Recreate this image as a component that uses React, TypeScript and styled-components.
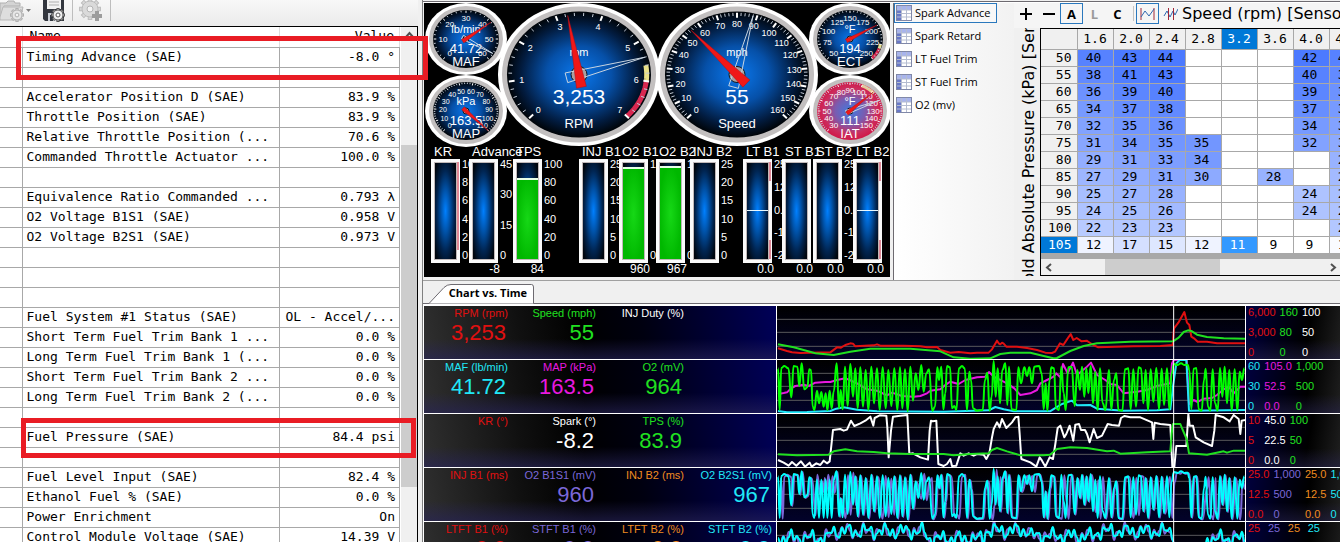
import React from 'react';
import styled, { createGlobalStyle } from 'styled-components';

const GlobalStyle = createGlobalStyle`
  * { box-sizing: border-box; }
  body { margin: 0; background: #f0f0f0; color: #000; font-family: 'Liberation Sans', Arial, sans-serif; }
  button { font: inherit; color: inherit; margin: 0; padding: 0; border: 0; background: none; }
  table { border-collapse: collapse; }
`;

const mono = `'DejaVu Sans Mono', 'Liberation Mono', monospace`;
const ui = `'Open Sans', 'Noto Sans', sans-serif`;

/* ---------- page ---------- */

const Page = styled.main`
  position: relative;
  display: grid;
  grid-template-columns: 418px minmax(0, 1fr);
  height: 100vh;
  overflow: hidden;
`;

const Highlight = styled.div<{ $left: number; $top: number; $width: number; $height: number }>`
  position: absolute;
  left: ${(p) => p.$left}px;
  top: ${(p) => p.$top}px;
  width: ${(p) => p.$width}px;
  height: ${(p) => p.$height}px;
  border: 5px solid #e91c24;
  pointer-events: none;
`;

/* ---------- channel list ---------- */

const ChannelPane = styled.section`
  display: flex;
  flex-direction: column;
  min-height: 0;
`;

const Toolbar = styled.div`
  display: flex;
  flex: none;
  height: 26px;
  padding-bottom: 3px;
  background: linear-gradient(#f8f8f8, #ebebeb);
`;

const ToolButton = styled.button<{ $width: number }>`
  display: flex;
  align-items: flex-start;
  width: ${(p) => p.$width}px;
  overflow: hidden;
`;

const ToolSeparator = styled.span`
  width: 1px;
  margin-right: 6px;
  height: 21px;
  background: #bdbdbd;
`;

const ChannelBody = styled.div`
  display: flex;
  flex: 1;
  min-height: 0;
  overflow: hidden;
  border-top: 1px solid #000;
  border-right: 1px solid #000;
  background: #fff;
`;

const ChannelTable = styled.table`
  table-layout: fixed;
  width: 400px;
  align-self: flex-start;
  font: 13px/18px ${mono};
  thead tr { height: 20px; }
`;

const ChannelRow = styled.tr`
  height: 20px;
`;

const ChannelCell = styled.td<{ $right?: boolean }>`
  padding: 0 4px 1px 4px;
  border-right: 1px solid #a8a8a8;
  border-bottom: 1px solid #a8a8a8;
  text-align: ${(p) => (p.$right ? 'right' : 'left')};
  white-space: nowrap;
  overflow: hidden;
`;

const HeadCell = styled(ChannelCell)`
  padding: 0 5px 1px 7px;
  border-right-color: #ddd;
  font-weight: normal;
`;

const ScrollTrack = styled.div`
  display: flex;
  flex-direction: column;
  flex: 1;
  background: #f0f0f0;
  border-left: 1px solid #fff;
`;

const ScrollArrow = styled.button`
  display: grid;
  place-items: center;
  flex: none;
  width: 16px;
  height: 17px;
`;

const ScrollThumb = styled.div`
  height: 342px;
  margin-top: 101px;
  background: #cdcdcd;
`;

/* ---------- right side ---------- */

const Workspace = styled.div`
  display: flex;
  flex-direction: column;
  min-width: 0;
  margin-left: 4px;
  border-left: 1px solid #808080;
  background: #f0f0f0;
`;

const TopStrip = styled.div`
  flex: none;
  height: 3px;
  border-bottom: 1px solid #fff;
  background: linear-gradient(#f0f0f0 1px, #6d6a70 1px);
`;

const TopPanels = styled.div`
  display: flex;
  flex: none;
  height: 278px;
  padding-left: 1px;
  border-bottom: 1px solid #a0a0a0;
`;

const GaugePanel = styled.section`
  flex: none;
  width: 466px;
  height: 274px;
  background: #000;
  color: #fff;
  overflow: hidden;
`;

const DialRow = styled.div`
  display: flex;
  height: 143px;
  padding-left: 1px;
`;

const DialStack = styled.div`
  display: flex;
  flex-direction: column;
  justify-content: space-between;
  flex: none;
  width: 82px;
  & + *, * + & { margin-left: -9px; }
  svg { margin: 0 0 -1px; }
`;

const BigDialBox = styled.div`
  flex: none;
  width: 162px;
  & + & { margin-left: -4px; }
`;

const MeterRow = styled.div`
  display: flex;
  padding-left: 7px;
`;

const Meter = styled.div<{ $pitch: number }>`
  position: relative;
  flex: none;
  width: ${(p) => p.$pitch}px;
  white-space: nowrap;
`;

const MeterName = styled.div`
  height: 13px;
  padding-left: 3px;
  font-size: 13px;
  line-height: 12px;
`;

const MeterBody = styled.div`
  display: flex;
  height: 104px;
`;

const MeterFrame = styled.div`
  position: relative;
  display: flex;
  flex: none;
  flex-direction: column;
  justify-content: flex-end;
  width: 29px;
  border: 3px solid #fafafa;
  padding: 1px;
  background: radial-gradient(ellipse at center, #0080ff 0, #0054ac 30%, #002450 60%, #00060e 90%) content-box, #c0b8b8;
`;

const MeterFill = styled.div`
  border-top: 2px solid #e8ffe8;
  background: radial-gradient(ellipse at center, #16d816, #00b800 75%);
`;

const MeterZone = styled.span<{ $top: number; $size: number }>`
  position: absolute;
  right: -2px;
  top: ${(p) => p.$top}px;
  width: 2px;
  height: ${(p) => p.$size}px;
  background: #e08896;
`;

const MeterZero = styled.span`
  position: absolute;
  left: 1px;
  right: 1px;
  top: 48px;
  height: 1px;
  background: #e8f8ff;
`;

const MeterScale = styled.div`
  display: flex;
  flex-direction: column;
  justify-content: space-between;
  width: 0;
  height: 102px;
  padding-left: 2px;
  font-size: 11px;
  line-height: 11px;
`;

const MeterValue = styled.div`
  width: 31px;
  height: 14px;
  font-size: 12px;
  line-height: 12px;
  text-align: right;
`;

/* ---------- histogram ---------- */

const HistogramList = styled.nav`
  display: flex;
  flex-direction: column;
  gap: 3px;
  flex: none;
  width: 121px;
  margin-left: 3px;
  border-left: 1px solid #6d6a70;
  background: linear-gradient(90deg, #fff, #f2f2f2);
  font: 11px/18px ${ui};
`;

const HistogramItem = styled.button<{ $active?: boolean }>`
  display: flex;
  align-items: center;
  gap: 3px;
  width: 103px;
  height: 20px;
  padding-left: 1px;
  border: 1px solid ${(p) => (p.$active ? '#2a78bd' : 'transparent')};
  background: ${(p) => (p.$active ? '#f8f8f8' : 'transparent')};
  text-align: left;
  white-space: nowrap;
`;

const HistogramPane = styled.section`
  display: flex;
  flex: 1;
  flex-direction: column;
  min-width: 0;
`;

const HistogramBar = styled.div`
  display: flex;
  align-items: center;
  flex: none;
  height: 25px;
  padding-bottom: 4px;
  overflow: hidden;
  background: #f5f5f5;
`;

const ModeButton = styled.button<{ $on?: boolean; $muted?: boolean }>`
  display: grid;
  place-items: center;
  flex: none;
  width: 23px;
  height: 21px;
  border: 1px solid ${(p) => (p.$on ? '#2a78bd' : 'transparent')};
  color: ${(p) => (p.$muted ? '#9a9a9a' : '#000')};
  font: bold 13px/16px ${ui};
`;

const BarSeparator = styled.span`
  flex: none;
  width: 1px;
  height: 15px;
  margin: 0 2px 0 4px;
  background: #c4c4c4;
`;

const AxisTitle = styled.h2`
  margin: 0;
  font: 16px/20px 'DejaVu Sans', sans-serif;
  white-space: nowrap;
`;

const HistogramBody = styled.div`
  display: flex;
  flex: 1;
  min-height: 0;
  padding-bottom: 4px;
`;

const AxisColumn = styled.div`
  display: flex;
  align-items: center;
  justify-content: center;
  flex: none;
  width: 26px;
  padding: 14px 0 0 4px;
  overflow: hidden;
  h2 { writing-mode: vertical-rl; transform: rotate(180deg); }
`;

const GridFrame = styled.div`
  flex: 1;
  min-width: 0;
  overflow: hidden;
  border: 1px solid #000;
  border-right: 0;
  background: #a8a8a8;
`;

const GridTable = styled.table`
  table-layout: fixed;
  width: 324px;
  font: 13px/15px ${mono};
  text-align: center;
`;

const ColHead = styled.th<{ $on?: boolean }>`
  height: 20px;
  padding: 0;
  font-weight: normal;
  border-right: 1px solid #a8a8a8;
  border-bottom: 1px solid #a8a8a8;
  background: ${(p) => (p.$on ? '#0078d7' : '#f0f0f0')};
  color: ${(p) => (p.$on ? '#fff' : '#000')};
`;

const RowHead = styled(ColHead)`
  height: 17px;
  padding-right: 5px;
  text-align: right;
`;

const Cell = styled.td<{ $tint: string; $on?: boolean }>`
  height: 17px;
  padding: 0 3px 0 0;
  border-right: 1px solid #a8a8a8;
  border-bottom: 1px solid #a8a8a8;
  background: ${(p) => p.$tint};
  color: ${(p) => (p.$on ? '#fff' : '#000')};
`;

const HScroll = styled.div`
  display: flex;
  justify-content: space-between;
  height: 17px;
  margin-top: 5px;
  background: #f0f0f0;
`;

const HThumb = styled.div`
  flex: none;
  width: 115px;
  margin-left: 48px;
  margin-right: auto;
  background: #cdcdcd;
`;

/* ---------- chart ---------- */

const TabBar = styled.div`
  flex: none;
  display: flex;
  align-items: flex-end;
  height: 23px;
  padding-left: 6px;
  border-bottom: 1px solid #6d6a70;
`;

const Tab = styled.button`
  position: relative;
  width: 105px;
  height: 20px;
  margin-bottom: -1px;
  padding: 0 0 3px 13px;
  font: bold 11px/17px ${ui};
  white-space: nowrap;
  svg { position: absolute; left: 0; top: 0; }
  span { position: relative; }
`;

const ChartList = styled.section`
  display: flex;
  flex: 1;
  flex-direction: column;
  gap: 1px;
  min-height: 0;
  overflow: hidden;
  padding: 2px 0 0 1px;
  background: #fff;
`;

const ChartRow = styled.div`
  display: grid;
  grid-template-columns: 352px minmax(0, 1fr) 94px;
  gap: 1px;
  flex: none;
  height: 53px;
`;

const Readouts = styled.div`
  display: grid;
  grid-template-columns: repeat(4, 88px);
  background: linear-gradient(to top, rgba(40, 36, 90, 0.6), transparent 38%),
    linear-gradient(80deg, #303030 0, #101010 28%, #000 45%, #000010 62%, #000058 100%);
`;

const Readout = styled.div<{ $color: string }>`
  color: ${(p) => p.$color};
  text-align: right;
  white-space: nowrap;
`;

const ReadoutName = styled.div`
  padding-right: 4px;
  font-size: 11px;
  line-height: 14px;
`;

const ReadoutValue = styled.div`
  padding-right: 6px;
  font-size: 22px;
  line-height: 26px;
`;

const Plot = styled.svg`
  display: block;
  width: 100%;
  height: 53px;
  background: linear-gradient(#000, #02022a);
`;

const Scales = styled.div`
  display: flex;
  gap: 4px;
  padding-left: 2px;
  overflow: hidden;
  background: linear-gradient(to top, rgba(40, 36, 80, 0.5), transparent 35%),
    linear-gradient(100deg, #000040 0, #000014 40%, #000 65%, #202020 100%);
`;

const Scale = styled.div<{ $color: string }>`
  display: flex;
  flex: none;
  flex-direction: column;
  justify-content: space-between;
  color: ${(p) => p.$color};
  font-size: 11px;
  line-height: 13px;
`;

/* ---------- data ---------- */

const channels: [string, string][] = [
  ['Timing Advance (SAE)', '-8.0 °'],
  ['', ''],
  ['Accelerator Position D (SAE)', '83.9 %'],
  ['Throttle Position (SAE)', '83.9 %'],
  ['Relative Throttle Position (...', '70.6 %'],
  ['Commanded Throttle Actuator ...', '100.0 %'],
  ['', ''],
  ['Equivalence Ratio Commanded ...', '0.793 λ'],
  ['O2 Voltage B1S1 (SAE)', '0.958 V'],
  ['O2 Voltage B2S1 (SAE)', '0.973 V'],
  ['', ''],
  ['', ''],
  ['', ''],
  ['Fuel System #1 Status (SAE)', 'OL - Accel/...'],
  ['Short Term Fuel Trim Bank 1 ...', '0.0 %'],
  ['Long Term Fuel Trim Bank 1 (...', '0.0 %'],
  ['Short Term Fuel Trim Bank 2 ...', '0.0 %'],
  ['Long Term Fuel Trim Bank 2 (...', '0.0 %'],
  ['', ''],
  ['Fuel Pressure (SAE)', '84.4 psi'],
  ['', ''],
  ['Fuel Level Input (SAE)', '82.4 %'],
  ['Ethanol Fuel % (SAE)', '0.0 %'],
  ['Power Enrichment', 'On'],
  ['Control Module Voltage (SAE)', '14.39 V'],
];

interface MeterSpec {
  name: string;
  pitch: number;
  ticks?: string[];
  value?: string;
  fill?: number;
  zero?: boolean;
  zones?: [number, number][];
}

const injTicks = ['25', '20', '15', '10', '5', '0'];
const trimTicks = ['25', '12.5', '0.0', '-12.5', '-25'];

const meters: MeterSpec[] = [
  { name: 'KR', pitch: 38, ticks: ['10', '8', '6', '4', '2', '0'], zones: [[0, 88]] },
  { name: 'Advance', pitch: 44, ticks: ['45', '30', '15', '0'], value: '-8' },
  { name: 'TPS', pitch: 66, ticks: ['100', '80', '60', '40', '20', '0'], value: '84', fill: 84 },
  { name: 'INJ B1', pitch: 40, ticks: injTicks },
  { name: 'O2 B1', pitch: 37, ticks: ['1,000', '0'], value: '960', fill: 96 },
  { name: 'O2 B2', pitch: 34, ticks: ['1,000', '0'], value: '967', fill: 97 },
  { name: 'INJ B2', pitch: 53, ticks: injTicks },
  { name: 'LT B1', pitch: 39, ticks: trimTicks, value: '0.0', zero: true, zones: [[0, 19], [78, 19]] },
  { name: 'ST B1', pitch: 31, value: '0.0' },
  { name: 'ST B2', pitch: 40, ticks: trimTicks, value: '0.0' },
  { name: 'LT B2', pitch: 37, value: '0.0', zero: true, zones: [[0, 19], [78, 19]] },
];

const gridCols = ['1.6', '2.0', '2.4', '2.8', '3.2', '3.6', '4.0', '4.4'];
const gridRows: [string, (number | null)[]][] = [
  ['50', [40, 43, 44, null, null, null, 42, 40]],
  ['55', [38, 41, 43, null, null, null, 40, 38]],
  ['60', [36, 39, 40, null, null, null, 39, 36]],
  ['65', [34, 37, 38, null, null, null, 37, 34]],
  ['70', [32, 35, 36, null, null, null, 34, 32]],
  ['75', [31, 34, 35, 35, null, null, 32, 30]],
  ['80', [29, 31, 33, 34, null, null, null, 28]],
  ['85', [27, 29, 31, 30, null, 28, null, 26]],
  ['90', [25, 27, 28, null, null, null, 24, 25]],
  ['95', [24, 25, 26, null, null, null, 24, 24]],
  ['100', [22, 23, 23, null, null, null, null, 23]],
  ['105', [12, 17, 15, 12, 11, 9, 9, 10]],
];

const tint = (v: number | null) => {
  if (v === null) return '#fff';
  const t = Math.max(0, Math.min(1, (v - 9) / 33));
  return `rgb(${Math.round(255 - 179 * t)}, ${Math.round(255 - 133 * t)}, 255)`;
};

const red = '#e01010';
const green = '#20e020';
const cyan = '#20e8f8';
const magenta = '#e818e0';
const violet = '#7b68d8';
const orange = '#f08c20';
const white = '#ffffff';

/* Traces use a 1404 x 159 grid per plot, y growing downwards. */
const line = (points: string) => `M${points.split(' ').join('L')}`;

const rpmTrace = line(
  '3,127 30,135 45,139 70,141 160,139 180,124 192,125 205,117 220,112 228,113 235,121 290,118 300,115 310,119 380,119 430,121 450,124 480,123 490,132 520,140 545,138 580,142 600,140 635,140 645,130 660,104 665,112 670,115 675,110 680,113 688,122 720,122 750,126 780,132 805,140 825,141 834,137 849,112 859,117 870,100 881,84 889,102 899,96 914,106 929,104 935,108 949,117 964,124 1069,121 1150,120 1187,117 1191,67 1204,50 1222,18 1230,50 1237,57 1243,92 1251,97 1262,107 1290,107 1320,112 1404,112',
);
const speedTrace = line(
  '3,115 50,124 115,142 170,147 220,137 280,128 400,128 490,136 530,154 580,158 640,157 670,144 700,140 760,140 800,150 829,157 840,156 880,135 920,120 960,112 1060,107 1188,106 1205,95 1220,78 1233,73 1245,76 1260,86 1290,93 1340,97 1404,98',
);
const mapTrace = line(
  '3,102 20,99 30,97 42,85 55,78 80,74 95,78 115,68 145,66 160,66 180,60 205,55 218,60 240,70 270,88 300,92 315,99 330,106 345,98 375,108 410,110 430,108 450,100 460,92 490,88 505,75 520,65 545,72 565,60 600,52 625,50 636,36 650,50 690,70 712,85 730,105 760,100 780,90 790,70 810,60 830,50 838,40 850,52 858,12 872,40 888,8 900,45 930,20 942,8 960,45 985,60 1000,72 1020,75 1040,100 1080,95 1110,90 1140,78 1180,70 1185,10 1190,0 1229,0 1236,132 1250,120 1262,126 1280,116 1305,114 1320,105 1340,88 1355,80 1370,100 1390,80 1404,80',
);
const mafTrace = line(
  '3,153 30,157 90,156 160,153 178,146 200,142 240,149 300,154 500,155 635,151 655,141 680,148 710,154 819,154 838,142 855,132 885,122 900,136 940,135 960,146 1040,152 1140,151 1180,148 1188,80 1198,10 1208,0 1228,0 1236,152 1404,150',
);
const sparkTrace = line(
  '3,138 20,146 35,155 45,144 58,155 72,142 84,158 98,146 104,158 118,148 130,153 140,140 150,148 158,142 168,48 190,45 200,50 210,47 222,20 232,36 250,28 265,20 280,8 289,35 293,12 308,4 328,5 331,40 335,130 342,50 348,8 370,5 391,3 397,120 408,118 430,130 453,137 458,50 462,20 467,22 478,20 484,150 500,156 510,150 520,135 525,156 538,155 550,118 560,125 575,118 590,125 600,120 620,122 628,135 637,118 645,70 650,45 660,25 668,40 675,15 688,42 705,25 715,10 724,8 728,60 733,135 760,145 778,158 788,130 795,140 805,158 818,130 828,135 835,90 842,42 850,35 862,70 868,60 878,35 889,80 895,32 906,30 912,48 924,48 930,60 938,85 950,45 960,72 975,65 992,30 1005,33 1026,35 1032,12 1042,6 1060,10 1090,10 1125,25 1129,75 1133,26 1150,30 1180,33 1186,158 1192,158 1198,96 1228,96 1234,0 1238,35 1248,35 1256,70 1280,85 1305,96 1312,50 1316,3 1340,10 1358,22 1370,3 1385,15 1390,60 1394,20 1404,18',
);
const tpsTrace = line(
  '3,121 60,124 155,122 170,112 205,106 240,112 290,114 330,118 400,120 500,120 530,124 580,120 635,118 645,108 660,102 690,112 730,124 800,124 819,122 840,105 880,100 930,102 990,112 1010,110 1030,119 1110,115 1180,112 1184,60 1188,30 1210,30 1216,45 1229,75 1236,118 1290,122 1340,112 1350,116 1370,110 1404,110',
);
const o2Points: [number, number][] = [
  [3, 25], [8, 150], [13, 24], [22, 18], [34, 25], [43, 112], [50, 18], [61, 20], [67, 78], [74, 10], [82, 88],
  [91, 82], [97, 28], [102, 30], [107, 140], [112, 150], [120, 92], [126, 130], [133, 96], [140, 140], [146, 100],
  [151, 150], [158, 92], [164, 145], [170, 95], [179, 10], [186, 145], [191, 90], [197, 148], [204, 20], [212, 138],
  [220, 12], [228, 110], [235, 25], [242, 145], [250, 22], [258, 140], [266, 30], [274, 150], [283, 20], [291, 130],
  [300, 25], [308, 150], [317, 22], [326, 145], [334, 30], [343, 138], [352, 25], [361, 150], [369, 22], [376, 145],
  [384, 28], [392, 154], [400, 20], [408, 122], [416, 40], [424, 90], [433, 15], [440, 95], [448, 40], [456, 28],
  [466, 152], [474, 140], [481, 22], [486, 60], [493, 20], [499, 148], [505, 100], [510, 18], [519, 22], [525, 145],
  [532, 138], [538, 150], [546, 25], [555, 18], [563, 25], [570, 150], [577, 35], [582, 60], [588, 145], [600, 152],
  [617, 150], [624, 60], [631, 38], [638, 152], [644, 110], [650, 3], [656, 110], [662, 25], [669, 130], [676, 30],
  [685, 10], [691, 135], [696, 20], [704, 148], [718, 150], [724, 22], [732, 70], [742, 22], [750, 48], [757, 22],
  [765, 70], [772, 20], [786, 18], [794, 40], [800, 148], [806, 70], [811, 152], [818, 60], [823, 22], [831, 25],
  [837, 145], [846, 150], [853, 20], [860, 100], [866, 150], [874, 22], [884, 20], [893, 138], [901, 30], [909, 90],
  [915, 20], [922, 110], [928, 25], [934, 100], [941, 18], [948, 130], [955, 35], [962, 150], [969, 25], [977, 130],
  [985, 150], [996, 30], [1003, 148], [1011, 60], [1018, 40], [1024, 150], [1036, 152], [1044, 28], [1054, 25],
  [1061, 148], [1069, 28], [1077, 140], [1085, 22], [1092, 25], [1099, 130], [1106, 30], [1113, 150], [1121, 28],
  [1129, 125], [1138, 24], [1146, 148], [1154, 26], [1161, 135], [1170, 25], [1177, 148], [1184, 40], [1191, 12],
  [1202, 15], [1212, 10], [1222, 15], [1232, 14], [1237, 30], [1243, 148], [1250, 26], [1258, 24], [1265, 148],
  [1274, 152], [1281, 60], [1286, 26], [1293, 140], [1300, 152], [1307, 28], [1314, 130], [1322, 152], [1329, 24],
  [1336, 110], [1343, 20], [1350, 130], [1357, 30], [1364, 152], [1373, 28], [1381, 152], [1388, 35], [1395, 60],
  [1402, 25],
];

/* Joins the extremes of a signal with curves that are level at each extreme. */
const wave = (pts: [number, number][]) =>
  pts
    .map(([x, y], i) => {
      if (i === 0) return `M${x},${y}`;
      const [px, py] = pts[i - 1];
      const mid = (px + x) / 2;
      return `C${mid},${py} ${mid},${y} ${x},${y}`;
    })
    .join('');

const inWarmup = (x: number) => x > 108 && x < 172;
const o2b1 = wave(o2Points);
const o2b2 = wave(o2Points.map(([x, y]) => [x, inWarmup(x) ? (y > 120 ? 150 : 35) : y]));
const o2b1Late = wave(o2Points.map(([x, y], i) => [x + (i % 14 < 5 ? 9 : 3), inWarmup(x) ? 170 - y : y + 2]));
const trim = (shift: number) =>
  wave(
    Array.from({ length: 176 }, (_, i) => {
      const x = 3 + i * 8;
      const base = x < 160 ? 48 : x < 450 ? 28 : x < 620 ? 50 : x < 760 ? 26 : x < 960 ? 42 : x < 1190 ? 28 : x < 1290 ? 96 : 50;
      return [x, base + Math.round(16 * Math.sin(i * 2.3 + shift) + 12 * Math.sin(i * 0.9 + shift))] as [number, number];
    }),
  );

interface ChartSpec {
  readouts: [string, string, string][];
  scales: [string, string, string, string][];
  traces: [string, string][];
}

const charts: ChartSpec[] = [
  {
    readouts: [['RPM (rpm)', '3,253', red], ['Speed (mph)', '55', green], ['INJ Duty (%)', '', white]],
    scales: [['6,000', '3,000', '0', red], ['160', '80', '0', green], ['100', '50', '0', white]],
    traces: [[rpmTrace, red], [speedTrace, green]],
  },
  {
    readouts: [['MAF (lb/min)', '41.72', cyan], ['MAP (kPa)', '163.5', magenta], ['O2 (mV)', '964', green]],
    scales: [['60', '30', '0', cyan], ['105.0', '52.5', '0.0', magenta], ['1,000', '500', '0', green]],
    traces: [[mapTrace, magenta], [mafTrace, cyan], [o2b1, '#00ff00']],
  },
  {
    readouts: [['KR (°)', '', red], ['Spark (°)', '-8.2', white], ['TPS (%)', '83.9', green]],
    scales: [['10', '5', '0', red], ['45.0', '22.5', '0.0', white], ['100', '50', '0', green]],
    traces: [[sparkTrace, white], [tpsTrace, green]],
  },
  {
    readouts: [['INJ B1 (ms)', '', red], ['O2 B1S1 (mV)', '960', violet], ['INJ B2 (ms)', '', orange], ['O2 B2S1 (mV)', '967', cyan]],
    scales: [['25.0', '12.5', '0.0', red], ['1,000', '500', '0', violet], ['25.0', '12.5', '0.0', orange], ['1,000', '500', '0', cyan]],
    traces: [[o2b1Late, violet], [o2b2, '#00ffff']],
  },
  {
    readouts: [['LTFT B1 (%)', '0.0', red], ['STFT B1 (%)', '0.0', violet], ['LTFT B2 (%)', '0.0', orange], ['STFT B2 (%)', '0.0', cyan]],
    scales: [['25', '0', '-25', red], ['25', '0', '-25', violet], ['25', '0', '-25', orange], ['25', '0', '-25', cyan]],
    traces: [[trim(0.7), violet], [trim(0), '#00ffff']],
  },
];

/* ---------- dials ---------- */

interface DialProps {
  big?: boolean;
  hot?: boolean;
  min: number;
  max: number;
  step: number;
  minor: number;
  value: number;
  ghost?: number;
  unit: string;
  text: string;
  name: string;
  labelSize: number;
  zones?: [number, number, string][];
}

function Dial(p: DialProps) {
  const w = p.big ? 162 : 82;
  const h = p.big ? 143 : 72;
  const cx = w / 2;
  const cy = h / 2;
  const rx = p.big ? 72 : 33;
  const ry = p.big ? 63 : 29;
  const angle = (v: number) => ((v - p.min) / (p.max - p.min)) * 270 - 135;
  const at = (v: number, k: number): [number, number] => {
    const a = (angle(v) * Math.PI) / 180;
    return [cx + rx * k * Math.sin(a), cy - ry * k * Math.cos(a)];
  };
  const needle = (v: number) => {
    const [tx, ty] = at(v, 0.95);
    const len = Math.hypot(tx - cx, ty - cy);
    const ux = (tx - cx) / len;
    const uy = (ty - cy) / len;
    const tail = p.big ? 13 : 4;
    const half = p.big ? 5 : 2;
    const bx = cx - ux * tail;
    const by = cy - uy * tail;
    return `${tx},${ty} ${bx - uy * half},${by + ux * half} ${bx + uy * half},${by - ux * half}`;
  };
  const count = Math.round((p.max - p.min) / p.minor);
  const every = Math.round(p.step / p.minor);
  const id = `face-${p.name}`;
  return (
    <svg width={w} height={h} viewBox={`0 0 ${w} ${h}`} role="img" aria-label={`${p.name} ${p.text}`} display="block">
      <defs>
        <radialGradient id={id}>
          <stop offset="0" stopColor={p.hot ? '#3f7be0' : '#0a78ee'} />
          <stop offset="0.45" stopColor={p.hot ? '#7a5cb0' : '#0650a8'} />
          <stop offset="0.8" stopColor={p.hot ? '#cc2c5c' : '#021c40'} />
          <stop offset="1" stopColor={p.hot ? '#d01848' : '#000408'} />
        </radialGradient>
      </defs>
      <ellipse cx={cx} cy={cy} rx={w / 2} ry={h / 2} fill="#fff" />
      <ellipse cx={cx} cy={cy} rx={rx + (p.big ? 5 : 4)} ry={ry + (p.big ? 5 : 4)} fill="#c2bfbf" />
      <ellipse cx={cx} cy={cy} rx={rx} ry={ry} fill={`url(#${id})`} />
      {p.zones?.map(([from, to, color]) => (
        <polyline
          key={from}
          points={Array.from({ length: 13 }, (_, i) => at(from + ((to - from) * i) / 12, 0.94).join(',')).join(' ')}
          fill="none"
          stroke={color}
          strokeWidth={p.big ? 5 : 3}
        />
      ))}
      {Array.from({ length: count + 1 }, (_, i) => {
        const major = i % every === 0;
        const v = p.min + i * p.minor;
        const [x1, y1] = at(v, 0.98);
        const [x2, y2] = at(v, major ? 0.9 : 0.93);
        return <line key={i} x1={x1} y1={y1} x2={x2} y2={y2} stroke={major ? '#fff' : '#c4ccd8'} strokeWidth={major && p.big ? 2 : 1} />;
      })}
      <g fill="#fff" textAnchor="middle" dominantBaseline="central" fontFamily="'Liberation Sans', sans-serif">
        {Array.from({ length: Math.floor((p.max - p.min) / p.step) + 1 }, (_, i) => {
          const v = p.min + i * p.step;
          const [x, y] = at(v, p.big ? 0.8 : 0.7);
          return (
            <text key={v} x={x} y={y} fontSize={p.labelSize}>
              {v}
            </text>
          );
        })}
        <text x={cx} y={p.big ? 49 : 26} fontSize="11">{p.unit}</text>
        <text x={cx} y={p.big ? 93 : 45} fontSize={p.big ? 21 : 13}>{p.text}</text>
        <text x={cx} y={p.big ? 120 : 58} fontSize="13">{p.name}</text>
      </g>
      <circle cx={cx} cy={cy} r={p.big ? 8 : 3} fill="#a8a0a0" stroke="#101820" />
      {p.ghost !== undefined && <polygon points={needle(p.ghost)} fill="none" stroke="#c8d4e0" strokeWidth="1" />}
      <polygon points={needle(p.value)} fill="#f01818" stroke="#b00c14" strokeWidth="0.5" />
    </svg>
  );
}

/* ---------- icons ---------- */

const gearTeeth = Array.from({ length: 8 }, (_, i) => i * 45);

function Gear({ cx, cy, r, fill, stroke }: { cx: number; cy: number; r: number; fill: string; stroke: string }) {
  return (
    <g fill={fill} stroke={stroke}>
      {gearTeeth.map((a) => (
        <rect key={a} x={cx - r * 0.22} y={cy - r * 1.3} width={r * 0.44} height={r * 0.6} transform={`rotate(${a} ${cx} ${cy})`} />
      ))}
      <circle cx={cx} cy={cy} r={r} />
      <circle cx={cx} cy={cy} r={r * 0.38} fill="#f4f4f4" />
    </g>
  );
}

const OpenIcon = () => (
  <svg width="34" height="23" viewBox="0 0 34 23" aria-hidden="true">
    <path d="M0 3h6l2-2h6l1 2h5v3H4L0 18z" fill="#d4d4d4" stroke="#b0b0b0" />
    <path d="M3 7h20l-3 13H0v-3z" fill="#dedede" stroke="#b8b8b8" />
    <Gear cx={17} cy={15} r={5} fill="#e6e6e6" stroke="#b0b0b0" />
    <path d="M26 9h5l-2.500 3z" fill="#808080" />
  </svg>
);

const SaveIcon = () => (
  <svg width="30" height="23" viewBox="0 0 30 23" aria-hidden="true">
    <path d="M1 0h21v21H3l-2-2z" fill="#32363e" />
    <path d="M5 0h14v9H5z" fill="#f2f2f2" />
    <path d="M7 2h10M7 5h10" stroke="#b0b0b0" />
    <path d="M6 13h11v8H6z" fill="#c8ccd4" />
    <path d="M8 15h3v6H8z" fill="#32363e" />
    <Gear cx={16} cy={15} r={5} fill="#f0f0f0" stroke="#555" />
    <circle cx="16" cy="15" r="4" fill="#f0f0f0" />
    <circle cx="16" cy="15" r="2" fill="#fff" stroke="#555" />
  </svg>
);

const AddIcon = () => (
  <svg width="31" height="23" viewBox="0 0 31 23" aria-hidden="true">
    <Gear cx={11} cy={9} r={8} fill="#dadada" stroke="#bcbcbc" />
    <circle cx="11" cy="9" r="7" fill="#dadada" />
    <circle cx="11" cy="9" r="3" fill="#f4f4f4" stroke="#b4b4b4" />
    <path d="M18 11v10M13 16h10" stroke="#9c9c9c" strokeWidth="4" />
  </svg>
);

const GridIcon = () => (
  <svg width="16" height="16" viewBox="0 0 16 16" aria-hidden="true">
    <rect x="0.500" y="0.500" width="15" height="15" fill="#fff" stroke="#8088a8" />
    <path d="M1 1h14v4H1z" fill="#a8b4ec" />
    <path d="M1 5h4v10H1z" fill="#6878c8" />
    <path d="M1 5h14M1 8.500h14M1 12h14M5.500 1v14M10.500 1v14" stroke="#b4bcd0" />
  </svg>
);

const Chevron = ({ d }: { d: string }) => (
  <svg width="9" height="9" viewBox="0 0 9 9" aria-hidden="true">
    <path d={d} fill="none" stroke="#505050" strokeWidth="2" />
  </svg>
);

const PlusIcon = ({ minus }: { minus?: boolean }) => (
  <svg width="14" height="14" viewBox="0 0 14 14" aria-hidden="true">
    <path d={minus ? 'M1 7h12' : 'M1 7h12M7 1v12'} stroke="#000" strokeWidth="2" />
  </svg>
);

/* ---------- sections ---------- */

function ChannelList() {
  return (
    <ChannelPane>
      <Toolbar>
        <ToolButton $width={42} aria-label="Open configuration"><OpenIcon /></ToolButton>
        <ToolButton $width={30} aria-label="Save configuration"><SaveIcon /></ToolButton>
        <ToolSeparator />
        <ToolButton $width={31} aria-label="Add channel"><AddIcon /></ToolButton>
        <ToolSeparator />
      </Toolbar>
      <ChannelBody>
        <ChannelTable>
          <colgroup>
            <col width={22} />
            <col />
            <col width={120} />
          </colgroup>
          <thead>
            <tr>
              <HeadCell as="th" />
              <HeadCell as="th">Name</HeadCell>
              <HeadCell as="th" $right>Value</HeadCell>
            </tr>
          </thead>
          <tbody>
            {channels.map(([name, value], i) => (
              <ChannelRow key={i}>
                <ChannelCell />
                <ChannelCell>{name}</ChannelCell>
                <ChannelCell $right>{value}</ChannelCell>
              </ChannelRow>
            ))}
          </tbody>
        </ChannelTable>
        <ScrollTrack>
          <ScrollArrow aria-label="Scroll up"><Chevron d="M1 6l3.500-4L8 6" /></ScrollArrow>
          <ScrollThumb />
        </ScrollTrack>
      </ChannelBody>
    </ChannelPane>
  );
}

function Gauges() {
  return (
    <GaugePanel>
      <DialRow>
        <DialStack>
          <Dial name="MAF" unit="lb/min" text="41.72" min={0} max={60} step={10} minor={2} value={41.7} ghost={57} labelSize={8} />
          <Dial name="MAP" unit="kPa" text="163.5" min={0} max={110} step={10} minor={2} value={110} labelSize={7} />
        </DialStack>
        <BigDialBox>
          <Dial
            big name="RPM" unit="rpm" text="3,253" min={0} max={7} step={1} minor={0.2} value={3.253} ghost={5.4} labelSize={9}
            zones={[[5.6, 6, '#e8e088'], [6, 7, '#d82850']]}
          />
        </BigDialBox>
        <BigDialBox>
          <Dial big name="Speed" unit="mph" text="55" min={0} max={160} step={10} minor={2} value={55} ghost={88} labelSize={9} />
        </BigDialBox>
        <DialStack>
          <Dial
            name="ECT" unit="°F" text="194" min={50} max={250} step={25} minor={5} value={194} labelSize={8}
            zones={[[225, 232, '#e8e088'], [232, 250, '#d82850']]}
          />
          <Dial
            name="IAT" unit="°F" text="111" hot min={30} max={150} step={10} minor={2} value={111} ghost={120} labelSize={8}
            zones={[[100, 112, '#e8c890']]}
          />
        </DialStack>
      </DialRow>
      <MeterRow>
        {meters.map((m) => (
          <Meter key={m.name} $pitch={m.pitch}>
            <MeterName>{m.name}</MeterName>
            <MeterBody>
              <MeterFrame>
                {m.fill !== undefined && <MeterFill style={{ height: `${m.fill}%` }} />}
                {m.zero && <MeterZero />}
                {m.zones?.map(([top, size]) => <MeterZone key={top} $top={top} $size={size} />)}
              </MeterFrame>
              {m.ticks && <MeterScale>{m.ticks.map((t) => <span key={t}>{t}</span>)}</MeterScale>}
            </MeterBody>
            <MeterValue>{m.value}</MeterValue>
          </Meter>
        ))}
      </MeterRow>
    </GaugePanel>
  );
}

function Histogram() {
  return (
    <>
      <HistogramList>
        {['Spark Advance', 'Spark Retard', 'LT Fuel Trim', 'ST Fuel Trim', 'O2 (mv)'].map((name, i) => (
          <HistogramItem key={name} $active={i === 0}>
            <GridIcon />
            {name}
          </HistogramItem>
        ))}
      </HistogramList>
      <HistogramPane>
        <HistogramBar>
          <ModeButton aria-label="Increase"><PlusIcon /></ModeButton>
          <ModeButton aria-label="Decrease"><PlusIcon minus /></ModeButton>
          <ModeButton $on>A</ModeButton>
          <ModeButton $muted>L</ModeButton>
          <ModeButton>C</ModeButton>
          <BarSeparator />
          <ModeButton $on aria-label="Show trace">
            <svg width="15" height="14" viewBox="0 0 15 14" aria-hidden="true">
              <path d="M1 1v12M14 1v12" stroke="#a02838" />
              <path d="M1 10l4-6 4 5 5-7" fill="none" stroke="#3068b0" />
            </svg>
          </ModeButton>
          <ModeButton aria-label="Show cells">
            <svg width="15" height="14" viewBox="0 0 15 14" aria-hidden="true">
              <path d="M1 9l3-5 3 6 3-6 2 4 3-6" fill="none" stroke="#3068b0" />
              <path d="M5.500 1v12M10.500 1v12" stroke="#a02838" />
            </svg>
          </ModeButton>
          <AxisTitle>Speed (rpm) [Sensor]</AxisTitle>
        </HistogramBar>
        <HistogramBody>
          <AxisColumn>
            <AxisTitle>Manifold Absolute Pressure (kPa) [Sensor]</AxisTitle>
          </AxisColumn>
          <GridFrame>
            <GridTable>
              <colgroup>
                <col width={36} />
                {gridCols.map((c) => <col key={c} width={36} />)}
              </colgroup>
              <thead>
                <tr>
                  <ColHead />
                  {gridCols.map((c) => <ColHead key={c} $on={c === '3.2'}>{c}</ColHead>)}
                </tr>
              </thead>
              <tbody>
                {gridRows.map(([label, values]) => (
                  <tr key={label}>
                    <RowHead $on={label === '105'}>{label}</RowHead>
                    {values.map((v, i) => {
                      const on = label === '105' && i === 4;
                      return <Cell key={i} $on={on} $tint={on ? '#3399ff' : tint(v)}>{v}</Cell>;
                    })}
                  </tr>
                ))}
              </tbody>
            </GridTable>
            <HScroll>
              <ScrollArrow aria-label="Scroll left"><Chevron d="M6 1L2 4.500 6 8" /></ScrollArrow>
              <HThumb />
              <ScrollArrow aria-label="Scroll right"><Chevron d="M3 1l4 3.500L3 8" /></ScrollArrow>
            </HScroll>
          </GridFrame>
        </HistogramBody>
      </HistogramPane>
    </>
  );
}

function Charts() {
  return (
    <>
      <TabBar>
        <Tab>
          <svg width="105" height="20" viewBox="0 0 105 20" aria-hidden="true">
            <path d="M0 19.500L15 3.500Q18 .5 22 .5H102.500Q104.500 .5 104.500 3V19.500" fill="#fff" stroke="#6d6a70" />
          </svg>
          <span>Chart vs. Time</span>
        </Tab>
      </TabBar>
      <ChartList>
        {charts.map((chart, row) => (
          <ChartRow key={row}>
            <Readouts>
              {chart.readouts.map(([name, value, color]) => (
                <Readout key={name} $color={color}>
                  <ReadoutName>{name}</ReadoutName>
                  <ReadoutValue>{value}</ReadoutValue>
                </Readout>
              ))}
            </Readouts>
            <Plot viewBox="0 0 1404 159" preserveAspectRatio="none">
              {[40, 79, 121].map((y) => (
                <path key={y} d={`M0 ${y}H1404`} stroke="#58585c" vectorEffect="non-scaling-stroke" />
              ))}
              {chart.traces.map(([d, color]) => (
                <path key={color} d={d} fill="none" stroke={color} strokeWidth="2" strokeLinejoin="round" vectorEffect="non-scaling-stroke" />
              ))}
              <path d="M1190 0V159" stroke="#fff" vectorEffect="non-scaling-stroke" />
            </Plot>
            <Scales>
              {chart.scales.map(([hi, mid, lo, color], i) => (
                <Scale key={i} $color={color}>
                  <span>{hi}</span>
                  <span>{mid}</span>
                  <span>{lo}</span>
                </Scale>
              ))}
            </Scales>
          </ChartRow>
        ))}
      </ChartList>
    </>
  );
}

export default function App() {
  return (
    <Page>
      <GlobalStyle />
      <ChannelList />
      <Workspace>
        <TopStrip />
        <TopPanels>
          <Gauges />
          <Histogram />
        </TopPanels>
        <Charts />
      </Workspace>
      <Highlight $left={16} $top={36} $width={412} $height={44} />
      <Highlight $left={21} $top={418} $width={395} $height={40} />
    </Page>
  );
}
